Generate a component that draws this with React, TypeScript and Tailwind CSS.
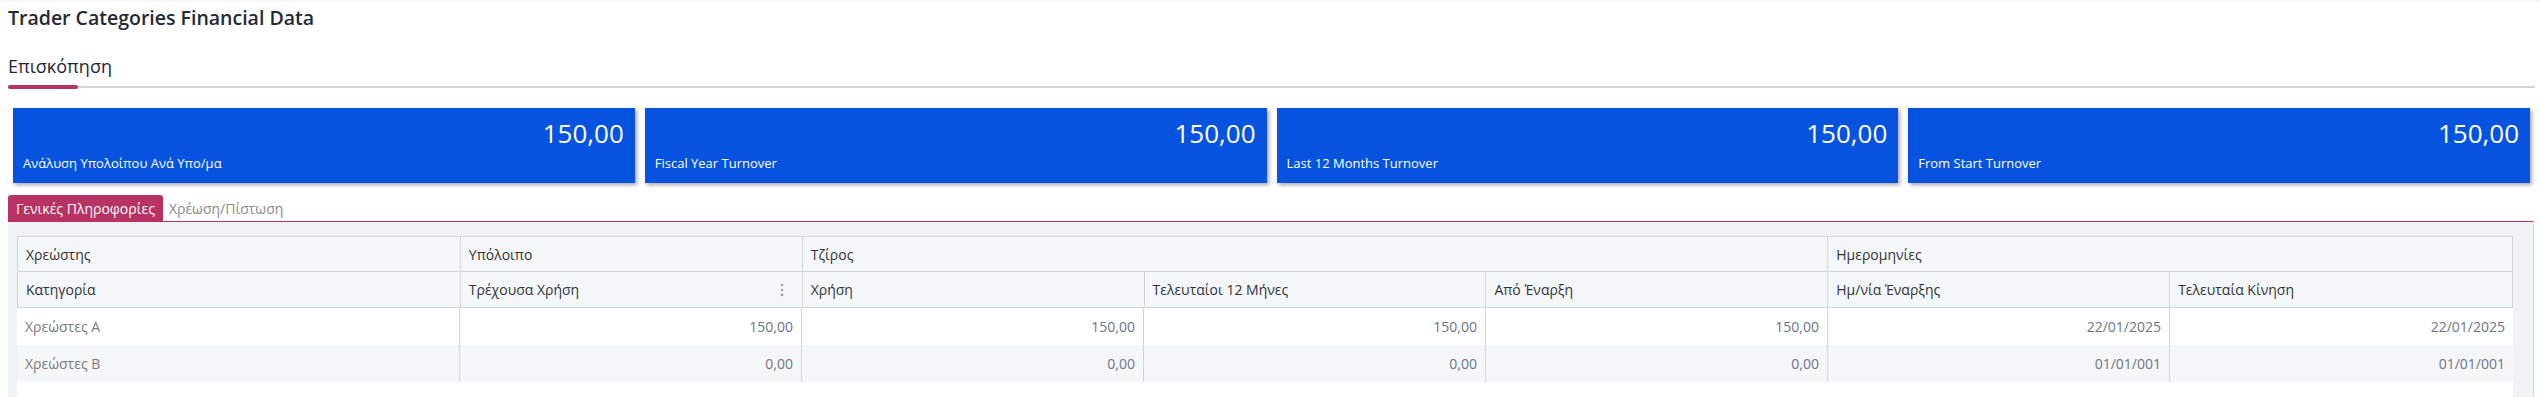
import React from "react";

const cards = [
  { label: "Ανάλυση Υπολοίπου Ανά Υπο/μα", value: "150,00" },
  { label: "Fiscal Year Turnover", value: "150,00" },
  { label: "Last 12 Months Turnover", value: "150,00" },
  { label: "From Start Turnover", value: "150,00" },
];

const rows = [
  { cat: "Χρεώστες Α", vals: ["150,00", "150,00", "150,00", "150,00", "22/01/2025", "22/01/2025"], bg: "bg-white" },
  { cat: "Χρεώστες Β", vals: ["0,00", "0,00", "0,00", "0,00", "01/01/001", "01/01/001"], bg: "bg-[#f5f6f8]" },
];

function Kebab() {
  return (
    <svg width="4" height="14" viewBox="0 0 4 14" className="text-[#9aa0a6]">
      <circle cx="2" cy="2" r="1.3" fill="currentColor" />
      <circle cx="2" cy="7" r="1.3" fill="currentColor" />
      <circle cx="2" cy="12" r="1.3" fill="currentColor" />
    </svg>
  );
}

export default function App() {
  const cols = "grid grid-cols-[443fr_342fr_342fr_342fr_342fr_342fr_343fr]";
  return (
    <div className="font-['Open_Sans',sans-serif] bg-white w-full h-[397px] overflow-hidden shadow-[inset_0_3px_3px_-2px_rgba(0,0,0,0.07)]">
      <div className="px-2 pt-1 text-[19.5px] leading-[28px] font-semibold text-[#232a36]">
        Trader Categories Financial Data
      </div>

      <div className="mt-[22px] pl-2 pr-[5px]">
        <div className="text-[18px] leading-6 text-[#1f2633]">Επισκόπηση</div>
        <div className="relative mt-[7px] h-[4px]">
          <div className="absolute left-0 right-0 top-[1px] h-[2px] bg-[#d2d2d2]" />
          <div className="relative w-[70px] h-[4px] rounded-full bg-[#b83263]" />
        </div>
      </div>

      <div className="mt-[19px] pl-[13px] pr-[10px] grid grid-cols-4 gap-[10px]">
        {cards.map((c) => (
          <div key={c.label} className="h-[75px] bg-[#0553de] shadow-[2px_2px_4px_rgba(0,0,0,0.35)] text-white">
            <div className="pt-[9px] pr-[11px] text-right text-[26px] leading-[32px]">{c.value}</div>
            <div className="mt-[5px] pl-[10px] text-[13px] leading-[18px]">{c.label}</div>
          </div>
        ))}
      </div>

      <div className="mt-[12px] pl-2 pr-[6px]">
        <div className="flex items-end h-[26px] text-[14px]">
          <div className="h-[26px] px-2 flex items-center rounded-t-[3px] bg-[#b83263] text-white">Γενικές Πληροφορίες</div>
          <div className="h-[26px] px-[6px] flex items-center text-[#8a8a8a]">Χρέωση/Πίστωση</div>
        </div>
        <div className="border-t border-[#b83263] border-r border-r-[#dcdcdc] bg-[#f0f3f5] pt-[14px] pl-[9px] pr-[20px] h-[200px]">
          <div className="text-[14px]">
            <div className={`${cols} h-[36px] bg-[#f3f7fa] border-t border-l border-[#d4d4d4] text-[#333]`}>
              <div className="px-2 flex items-center border-r border-b border-[#d4d4d4]">Χρεώστης</div>
              <div className="px-2 flex items-center border-r border-b border-[#d4d4d4]">Υπόλοιπο</div>
              <div className="col-span-3 px-2 flex items-center border-r border-b border-[#d4d4d4]">Τζίρος</div>
              <div className="col-span-2 px-2 flex items-center border-r border-b border-[#d4d4d4]">Ημερομηνίες</div>
            </div>
            <div className={`${cols} h-[36px] bg-[#f3f7fa] border-l border-[#d4d4d4] text-[#333]`}>
              <div className="px-2 flex items-center border-r border-b border-[#d4d4d4]">Κατηγορία</div>
              <div className="px-2 flex items-center justify-between border-r border-b border-[#d4d4d4]">
                <span>Τρέχουσα Χρήση</span>
                <span className="mr-[10px]"><Kebab /></span>
              </div>
              <div className="px-2 flex items-center border-r border-b border-[#d4d4d4]">Χρήση</div>
              <div className="px-2 flex items-center border-r border-b border-[#d4d4d4]">Τελευταίοι 12 Μήνες</div>
              <div className="px-2 flex items-center border-r border-b border-[#d4d4d4]">Από Έναρξη</div>
              <div className="px-2 flex items-center border-r border-b border-[#d4d4d4]">Ημ/νία Έναρξης</div>
              <div className="px-2 flex items-center border-r border-b border-[#d4d4d4]">Τελευταία Κίνηση</div>
            </div>
            {rows.map((r) => (
              <div key={r.cat} className={`${cols} h-[37px] ${r.bg}`}>
                <div className="px-2 flex items-center text-[#7a7a7a] border-r border-[#d4d4d4]">{r.cat}</div>
                {r.vals.map((v, i) => (
                  <div key={i} className={`px-2 flex items-center justify-end text-[#6b7585] ${i < 5 ? "border-r border-[#d4d4d4]" : ""}`}>
                    {v}
                  </div>
                ))}
              </div>
            ))}
            <div className="h-[40px] bg-white" />
          </div>
        </div>
      </div>
    </div>
  );
}
